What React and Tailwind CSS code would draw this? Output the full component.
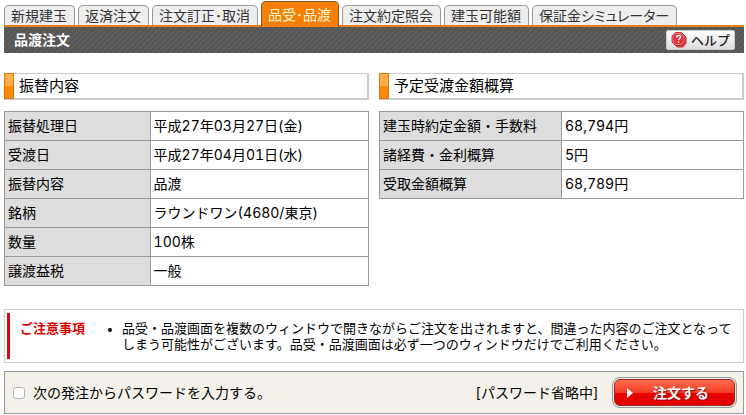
import React, { useState } from 'react';

const tabs = [
  { label: '新規建玉' },
  { label: '返済注文' },
  { label: '注文訂正･取消' },
  { label: '品受･品渡', active: true },
  { label: '注文約定照会' },
  { label: '建玉可能額' },
  { label: '保証金シミュレーター', proportional: true },
];

const transferRows = [
  ['振替処理日', '平成27年03月27日(金)'],
  ['受渡日', '平成27年04月01日(水)'],
  ['振替内容', '品渡'],
  ['銘柄', 'ラウンドワン(4680/東京)'],
  ['数量', '100株'],
  ['譲渡益税', '一般'],
];

const amountRows = [
  ['建玉時約定金額・手数料', '68,794円'],
  ['諸経費・金利概算', '5円'],
  ['受取金額概算', '68,789円'],
];

const Tab = ({ label, active, proportional }) => (
  <a
    href="#"
    aria-current={active ? 'page' : undefined}
    className={`
      block shrink-0 whitespace-nowrap rounded-t-[5px] border border-b-0 pr-[7px] pl-1.5 text-sm/5
      ${proportional ? "[font-feature-settings:'palt']" : ''}
      ${active
        ? 'relative -mb-0.5 h-[26px] border-[#8a5a1c] bg-[#f57f05] pt-[3px] text-[#fff6cf]'
        : 'h-5 border-[#999] bg-[#eee] text-[#333]'
      }
    `}
  >
    {label}
  </a>
);

const HelpIcon = () => (
  <svg className="h-4 w-4" viewBox="0 0 16 16" aria-hidden="true">
    <path d="M6 2h6l3.5 3.5v6L12 15.5H6L3 12V5z" fill="#c8434a" />
    <path d="M4.5.5h6L14 4v6l-3.5 3.5h-6L1 10V4z" fill="#e0303a" stroke="#b81c24" strokeWidth="0.8" />
    <path d="M4.9 1.5h5.200l2.900 2.900v5.200l-2.900 2.900H4.900L2 9.600V4.400z" fill="none" stroke="#f6a3a5" strokeWidth="0.7" />
    <path d="M5.500 5.400c0-1.200.9-1.900 2.100-1.900s2 .7 2 1.700c0 1.500-2 1.400-2 3" fill="none" stroke="#fff" strokeWidth="1.300" />
    <path d="M6.900 9.300h1.400v1.400H6.900z" fill="#fff" />
  </svg>
);

const SectionHeading = ({ children }) => (
  <div className="flex h-[27px] border border-r-2 border-b-2 border-[#ccc]">
    <span className="-mt-px -ml-px h-[26px] w-2.5 shrink-0 border border-[#dc7410] bg-linear-to-b from-[#ffae4a] from-50% to-[#ff8a00] to-50%" />
    <h2 className="pl-[5px] text-[15px]/6 font-normal">{children}</h2>
  </div>
);

const DetailTable = ({ rows, headClass, label }) => (
  <table aria-label={label} className="mt-[11px] w-full table-fixed border-collapse text-sm/5 tabular-nums">
    <tbody>
      {rows.map(([name, value]) => (
        <tr key={name} className="h-[29px]">
          <th scope="row" className={`${headClass} border border-[#999] bg-[#ddd] px-[3px] text-left font-normal`}>
            {name}
          </th>
          <td className="border border-[#999] bg-white px-[3px]">{value}</td>
        </tr>
      ))}
    </tbody>
  </table>
);

const App = () => {
  const [askPassword, setAskPassword] = useState(false);

  return (
    <div className="bg-white pt-px pr-0.5 pb-0.5 pl-1 font-['Inter','Noto_Sans_CJK_JP',sans-serif] text-black">
      <nav className="flex items-end gap-[3px]">
        {tabs.map((tab) => (
          <Tab key={tab.label} {...tab} />
        ))}
      </nav>

      <header className="flex h-7 items-center justify-between border-t-2 border-[#e87f18] bg-[repeating-linear-gradient(135deg,#555_0_2px,#5e5e5e_2px_4px)] pr-[9px] pl-2.5">
        <h1 className="text-sm/5 font-bold text-white">品渡注文</h1>
        <button
          type="button"
          className="flex h-5 items-center gap-1 rounded-xs border border-[#ccc] bg-linear-to-b from-white to-[#ddd] px-1 text-[13px]/4 font-medium text-[#222]"
        >
          <HelpIcon />
          ヘルプ
        </button>
      </header>

      <main>
        <div className="mt-5 grid grid-cols-2 items-start gap-2.5">
          <section>
            <SectionHeading>振替内容</SectionHeading>
            <DetailTable rows={transferRows} headClass="w-2/5" label="振替内容" />
          </section>
          <section>
            <SectionHeading>予定受渡金額概算</SectionHeading>
            <DetailTable rows={amountRows} headClass="w-1/2" label="予定受渡金額概算" />
          </section>
        </div>

        <section className="mt-[23px] border border-[#ccc] py-[3px] pl-0.5">
          <div className="flex border-l-[3px] border-[#d20a11] pt-[7px] pb-[7px] pl-2.5 text-[13px]/4">
            <h2 className="w-[90px] shrink-0 font-bold text-[#dd0000]">ご注意事項</h2>
            <ul className="min-w-0 list-disc pl-3 marker:text-[11px]">
              <li>
                品受・品渡画面を複数のウィンドウで開きながらご注文を出されますと、間違った内容のご注文となってしまう可能性がございます。品受・品渡画面は必ず一つのウィンドウだけでご利用ください。
              </li>
            </ul>
          </div>
        </section>

        <form
          className="mt-2 flex items-center justify-between border border-[#999] bg-[#f4f1ea] py-[5px] pr-1.5 pl-2 text-sm/5"
          onSubmit={(e) => e.preventDefault()}
        >
          <label className="flex items-center gap-2">
            <input
              type="checkbox"
              checked={askPassword}
              onChange={(e) => setAskPassword(e.target.checked)}
              className="h-3 w-3 appearance-none rounded-[3px] border border-[#b5b5b5] bg-white checked:bg-[#e00]"
            />
            次の発注からパスワードを入力する。
          </label>
          <div className="flex items-center gap-3.5">
            <span>[パスワード省略中]</span>
            <button type="submit" className="rounded-lg border border-[#999] bg-[#eee] p-px">
              <span className="flex h-[27px] w-[121px] items-center rounded-md border border-[#9c2a20] bg-linear-to-b from-[#ff6a50] via-[#f33a22] via-50% to-[#e60000] to-50% pl-3 font-bold text-white">
                <svg className="h-2.5 w-1.5" viewBox="0 0 6 10" aria-hidden="true">
                  <path d="M0 0l6 5-6 5z" fill="currentColor" />
                </svg>
                <span className="pl-5 [text-shadow:1px_1px_1px_#8b1010]">注文する</span>
              </span>
            </button>
          </div>
        </form>
      </main>
    </div>
  );
};

export default App;
